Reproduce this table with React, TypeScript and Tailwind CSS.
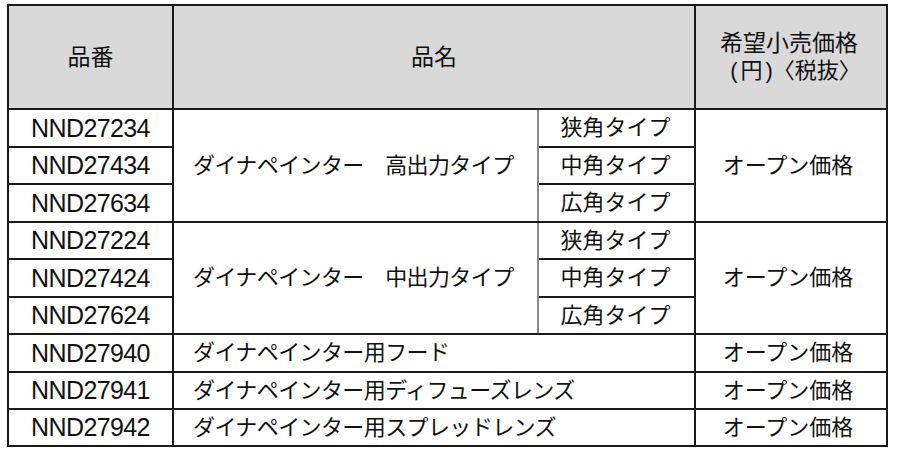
import React from "react";

const B = "border-2 border-[#1a1a1a]";
const G = "border-l-[#8a8a8a]";
const GR = "border-r-[#8a8a8a]";
const IN = "border-t-[#4a4a4a]";

type Group = { name: string; items: [string, string][] };

const groups: Group[] = [
  {
    name: "ダイナペインター　高出力タイプ",
    items: [
      ["NND27234", "狭角タイプ"],
      ["NND27434", "中角タイプ"],
      ["NND27634", "広角タイプ"],
    ],
  },
  {
    name: "ダイナペインター　中出力タイプ",
    items: [
      ["NND27224", "狭角タイプ"],
      ["NND27424", "中角タイプ"],
      ["NND27624", "広角タイプ"],
    ],
  },
];

const singles: [string, string][] = [
  ["NND27940", "ダイナペインター用フード"],
  ["NND27941", "ダイナペインター用ディフューズレンズ"],
  ["NND27942", "ダイナペインター用スプレッドレンズ"],
];

const heights = ["h-[38px]", "h-[37px]", "h-[38px]", "h-[37px]", "h-[38px]", "h-[37px]", "h-[38px]", "h-[37px]", "h-[37px]"];

export default function App() {
  let r = 0;
  const code = "text-[25px] tracking-[-0.6px] text-center text-[#111]";
  const jp = "text-[22px] text-[#111]";
  const hd = "text-[23px] text-[#111] font-normal text-center";
  const name = "text-[22px] text-[#111] text-left pl-[19px] tracking-[-0.6px]";
  return (
    <div className="w-[900px] h-[458px] bg-white pl-[7px] pt-[4px] font-['Liberation_Sans','Noto_Sans_CJK_JP',sans-serif] leading-none">
      <table className="border-collapse table-fixed w-[879px]">
        <colgroup>
          <col className="w-[165px]" />
          <col className="w-[365px]" />
          <col className="w-[157px]" />
          <col className="w-[192px]" />
        </colgroup>
        <thead>
          <tr className="h-[104px] bg-[#d9d9d9]">
            <th className={`${B} ${hd}`}>品番</th>
            <th colSpan={2} className={`${B} ${hd}`}>品名</th>
            <th className={`${B} ${hd} leading-[28px]`}>
              <div className="pr-[4px]">希望小売価格</div>
              <div className="pl-[6px] flex justify-center items-center text-[22px]">
                <span className="px-[3px]">(</span>
                <span>円</span>
                <span className="pl-[3px]">)</span>
                <span>〈</span>
                <span>税抜</span>
                <span>〉</span>
              </div>
            </th>
          </tr>
        </thead>
        <tbody>
          {groups.map((g) =>
            g.items.map(([c, t], i) => {
              const h = heights[r++];
              return (
                <tr key={c} className={h}>
                  <td className={`${B} ${i > 0 ? IN : ""} ${code}`}>{c}</td>
                  {i === 0 && (
                    <td rowSpan={3} className={`${B} ${GR} ${name}`}>
                      {g.name}
                    </td>
                  )}
                  <td className={`${B} ${G} ${i > 0 ? IN : ""} ${jp} text-center pr-[2px]`}>{t}</td>
                  {i === 0 && (
                    <td rowSpan={3} className={`${B} ${jp} text-center pr-[6px]`}>
                      オープン価格
                    </td>
                  )}
                </tr>
              );
            })
          )}
          {singles.map(([c, t]) => {
            const h = heights[r++];
            return (
              <tr key={c} className={h}>
                <td className={`${B} ${code}`}>{c}</td>
                <td colSpan={2} className={`${B} ${name}`}>{t}</td>
                <td className={`${B} ${jp} text-center pr-[6px]`}>オープン価格</td>
              </tr>
            );
          })}
        </tbody>
      </table>
    </div>
  );
}
